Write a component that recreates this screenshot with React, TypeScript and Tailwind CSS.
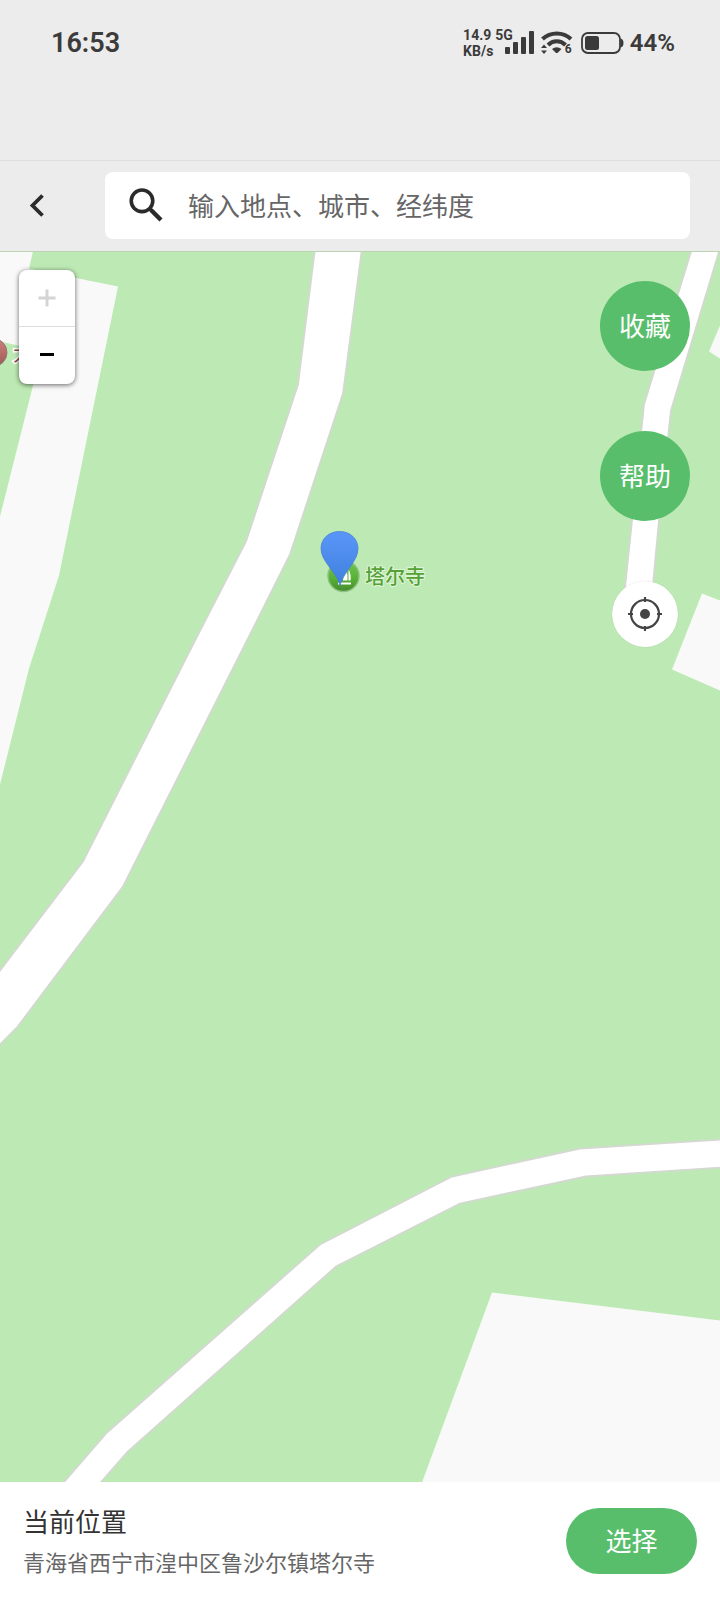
import { useState } from "react";

const roads = [
  // main road
  "M315 -3 L298 133 L246 290 L195 389 L83 610 L-3 723 L-3 796 L17 776 L123 635 L247 389 L290 303 L343 142 L362 -3 Z",
  // side road, right
  "M692 -3 L644 153 L632 269 L622 365 L650 365 L659 269 L671 159 L720 -3 Z",
  // lower road
  "M723 888 L580 897 L452 925 L320 993 L107 1181 L61 1234 L98 1234 L128 1200 L336 1015 L460 952 L586 925 L723 916 Z",
];

const plots = [
  "M0 0 H33 L29 17 L118 35 L59 324 L29 417 L0 533 V265 L33 134 L41 99 L0 90 Z",
  "M720 74 L709 100 L720 107 Z",
  "M702 342 L672 418 L720 439 V349 Z",
  "M492 1041 L720 1069 V1231 H422 Z",
];

function StatusBar() {
  return (
    <div className="flex h-[160px] items-start justify-between pl-[51px] pr-[45px] pt-[25px] font-['Roboto',sans-serif] text-[#3b3b3b]">
      <span className="text-[27px] font-semibold leading-9">16:53</span>
      <div className="flex h-9 items-center">
        <div className="flex flex-col text-sm font-bold leading-4">
          <span className="flex gap-1">
            <span>14.9</span>
            <span>5G</span>
          </span>
          <span>KB/s</span>
        </div>
        <svg className="-ml-2 h-6 w-[30px]" viewBox="0 0 30 24" fill="currentColor" aria-hidden="true">
          <rect x="0" y="16" width="5" height="7" rx="1" />
          <rect x="8" y="11" width="5" height="12" rx="1" />
          <rect x="16" y="6" width="5" height="17" rx="1" />
          <rect x="24" y="0" width="5" height="23" rx="1" />
        </svg>
        <div className="ml-1.5 flex w-8 items-end">
          <svg className="h-6 w-8 shrink-0" viewBox="0 0 32 24" aria-hidden="true">
            <path d="M1.500 8 C9.500 0.500 22 0.500 30 8" fill="none" stroke="currentColor" strokeWidth="4" />
            <path d="M7 14 C12 9 19.500 9 24.500 14" fill="none" stroke="currentColor" strokeWidth="4" />
            <path d="M11 18 Q15.500 14.500 20.500 18 L17 21.500 Q15.700 22.500 14.500 21.500 Z" fill="currentColor" />
            <path d="M0 17 L3 13.500 L6 17 Z M0 19.500 L3 23 L6 19.500 Z" fill="currentColor" />
          </svg>
          <span className="-ml-2 text-xs font-bold leading-3">6</span>
        </div>
        <svg className="ml-2 h-6 w-[43px]" viewBox="0 0 43 24" aria-hidden="true">
          <rect x="1" y="2" width="38" height="20" rx="6" fill="none" stroke="currentColor" strokeWidth="1.8" />
          <rect x="4" y="5" width="14" height="14" rx="2.5" fill="currentColor" />
          <path d="M39.500 7.500 Q42.500 8 42.500 12 Q42.500 16 39.500 16.500 Z" fill="currentColor" />
        </svg>
        <span className="ml-1.5 text-2xl font-semibold leading-9">44%</span>
      </div>
    </div>
  );
}

function SearchHeader() {
  const [query, setQuery] = useState("");

  return (
    <div className="flex h-[91px] items-center border-t border-[#dedede] pb-0.5 pr-[30px]">
      <button aria-label="返回" className="flex h-full w-[105px] shrink-0 items-center pl-[29px]">
        <svg className="h-6 w-4" viewBox="0 0 16 24" fill="none" stroke="#2b2b2b" strokeWidth="3.8">
          <path d="M13.500 2.500 L3.500 12.500 L13.500 22.500" />
        </svg>
      </button>
      <label className="flex h-[67px] flex-1 items-center rounded-lg bg-white pl-6">
        <svg className="h-[34px] w-[34px] shrink-0" viewBox="0 0 34 34" fill="none" stroke="#2b2b2b" aria-hidden="true">
          <circle cx="13" cy="12.800" r="10.800" strokeWidth="3.6" />
          <path d="M20 20 L22.500 22.500" strokeWidth="3.6" />
          <path d="M22 22 L32 32" strokeWidth="4.4" />
        </svg>
        <input
          type="text"
          value={query}
          onChange={(e) => setQuery(e.target.value)}
          placeholder="输入地点、城市、经纬度"
          aria-label="输入地点、城市、经纬度"
          className="ml-[25px] min-w-0 flex-1 bg-transparent text-[26px] leading-9 text-[#333] outline-none placeholder:text-[#666]"
        />
      </label>
    </div>
  );
}

function MapCanvas() {
  return (
    <svg className="absolute inset-0 h-full w-full" viewBox="0 0 720 1231" preserveAspectRatio="xMidYMid slice">
      <defs>
        <linearGradient id="pin" x1="0" y1="0" x2="0" y2="1">
          <stop offset="0" stopColor="#5a96fa" />
          <stop offset="1" stopColor="#3f80dc" />
        </linearGradient>
        <linearGradient id="poi" x1="0" y1="0" x2="0" y2="1">
          <stop offset="0" stopColor="#72c850" />
          <stop offset="0.6" stopColor="#57b035" />
          <stop offset="1" stopColor="#438a2e" />
        </linearGradient>
        <linearGradient id="red" x1="0" y1="0" x2="0" y2="1">
          <stop offset="0" stopColor="#d0807c" />
          <stop offset="1" stopColor="#9c5a58" />
        </linearGradient>
      </defs>
      <rect width="720" height="1231" fill="#bdeab4" />
      {plots.map((d) => (
        <path key={d} d={d} fill="#f9f9f9" />
      ))}
      {roads.map((d) => (
        <path key={d} d={d} fill="#fff" stroke="#d3d8d0" strokeWidth="1.8" />
      ))}

      {/* neighbouring place, mostly off screen */}
      <circle cx="-7" cy="101" r="14" fill="url(#red)" stroke="#8f7a70" strokeWidth="1" />
      <text x="13" y="109" fontSize="20" fill="#8a5548" stroke="#fff" strokeWidth="3" paintOrder="stroke">
        大
      </text>

      {/* temple */}
      <circle cx="343.500" cy="324.500" r="15.500" fill="url(#poi)" stroke="#8fbf80" strokeWidth="1.5" />
      <path d="M344 314 Q348 318 347.500 329 H343 Z" fill="#fff" />
      <path d="M348.500 318 Q351.500 323 350.500 329 H348.500 Z" fill="#fff" />
      <path d="M338 331 H351 V333 H338 Z" fill="#fff" />
      <text x="365" y="332" fontSize="20" fontWeight="500" fill="#56a136" stroke="#dff5d8" strokeWidth="2" paintOrder="stroke">
        塔尔寺
      </text>

      {/* selected point */}
      <path
        d="M340 334 C337 321 321 310 321 297 C321 287 329 280 339.500 280 C350 280 358 287 358 297 C358 310 343 321 340 334 Z"
        fill="url(#pin)"
        stroke="#4a80d0"
        strokeWidth="0.8"
      />
    </svg>
  );
}

function ZoomControl() {
  return (
    <div className="absolute left-[19px] top-[18px] w-14 overflow-hidden rounded-lg bg-white shadow-[0_1px_5px_rgba(0,0,0,0.6)]">
      <button disabled aria-label="放大" className="flex h-[57px] w-full items-center justify-center border-b border-[#ddd]">
        <svg className="h-5 w-5" viewBox="0 0 20 20" stroke="#d4d4d4" strokeWidth="3">
          <path d="M10 1.500 V18.500 M1.500 10 H18.500" />
        </svg>
      </button>
      <button aria-label="缩小" className="flex h-[57px] w-full items-center justify-center pb-1">
        <svg className="h-5 w-5" viewBox="0 0 20 20" stroke="#000" strokeWidth="3">
          <path d="M3 10.500 H17" />
        </svg>
      </button>
    </div>
  );
}

export default function App() {
  return (
    <div className="flex min-h-screen flex-col bg-[#ececec] font-['Noto_Sans_CJK_SC',sans-serif]">
      <header>
        <StatusBar />
        <SearchHeader />
      </header>

      <main className="relative min-h-[480px] flex-1 overflow-hidden border-t border-[#b9d3b3]">
        <MapCanvas />
        <ZoomControl />
        <div className="absolute right-[30px] top-[29px] flex flex-col items-center gap-[60px]">
          <button className="h-[90px] w-[90px] rounded-full bg-[#59be6c] pb-1 text-[26px] text-white">收藏</button>
          <button className="h-[90px] w-[90px] rounded-full bg-[#59be6c] pb-1 text-[26px] text-white">帮助</button>
          <button
            aria-label="定位"
            className="flex h-[66px] w-[66px] items-center justify-center rounded-full bg-white shadow-[0_0_1px_rgba(0,0,0,0.2)]"
          >
            <svg className="h-9 w-9" viewBox="0 0 36 36" fill="none" stroke="#444" strokeWidth="2.2">
              <circle cx="18" cy="18" r="14" />
              <circle cx="18" cy="18" r="5" fill="#444" stroke="none" />
              <path d="M18 1 V6 M18 30 V35 M1 18 H6 M30 18 H35" />
            </svg>
          </button>
        </div>
      </main>

      <footer className="flex h-[118px] items-center justify-between bg-white px-[23px]">
        <div className="min-w-0">
          <h1 className="text-[26px] leading-10 text-[#333]">当前位置</h1>
          <p className="text-[22px] leading-10 text-[#666]">青海省西宁市湟中区鲁沙尔镇塔尔寺</p>
        </div>
        <button className="h-[66px] w-[131px] shrink-0 rounded-full bg-[#59be6c] pb-1 text-[26px] text-white">
          选择
        </button>
      </footer>
    </div>
  );
}
